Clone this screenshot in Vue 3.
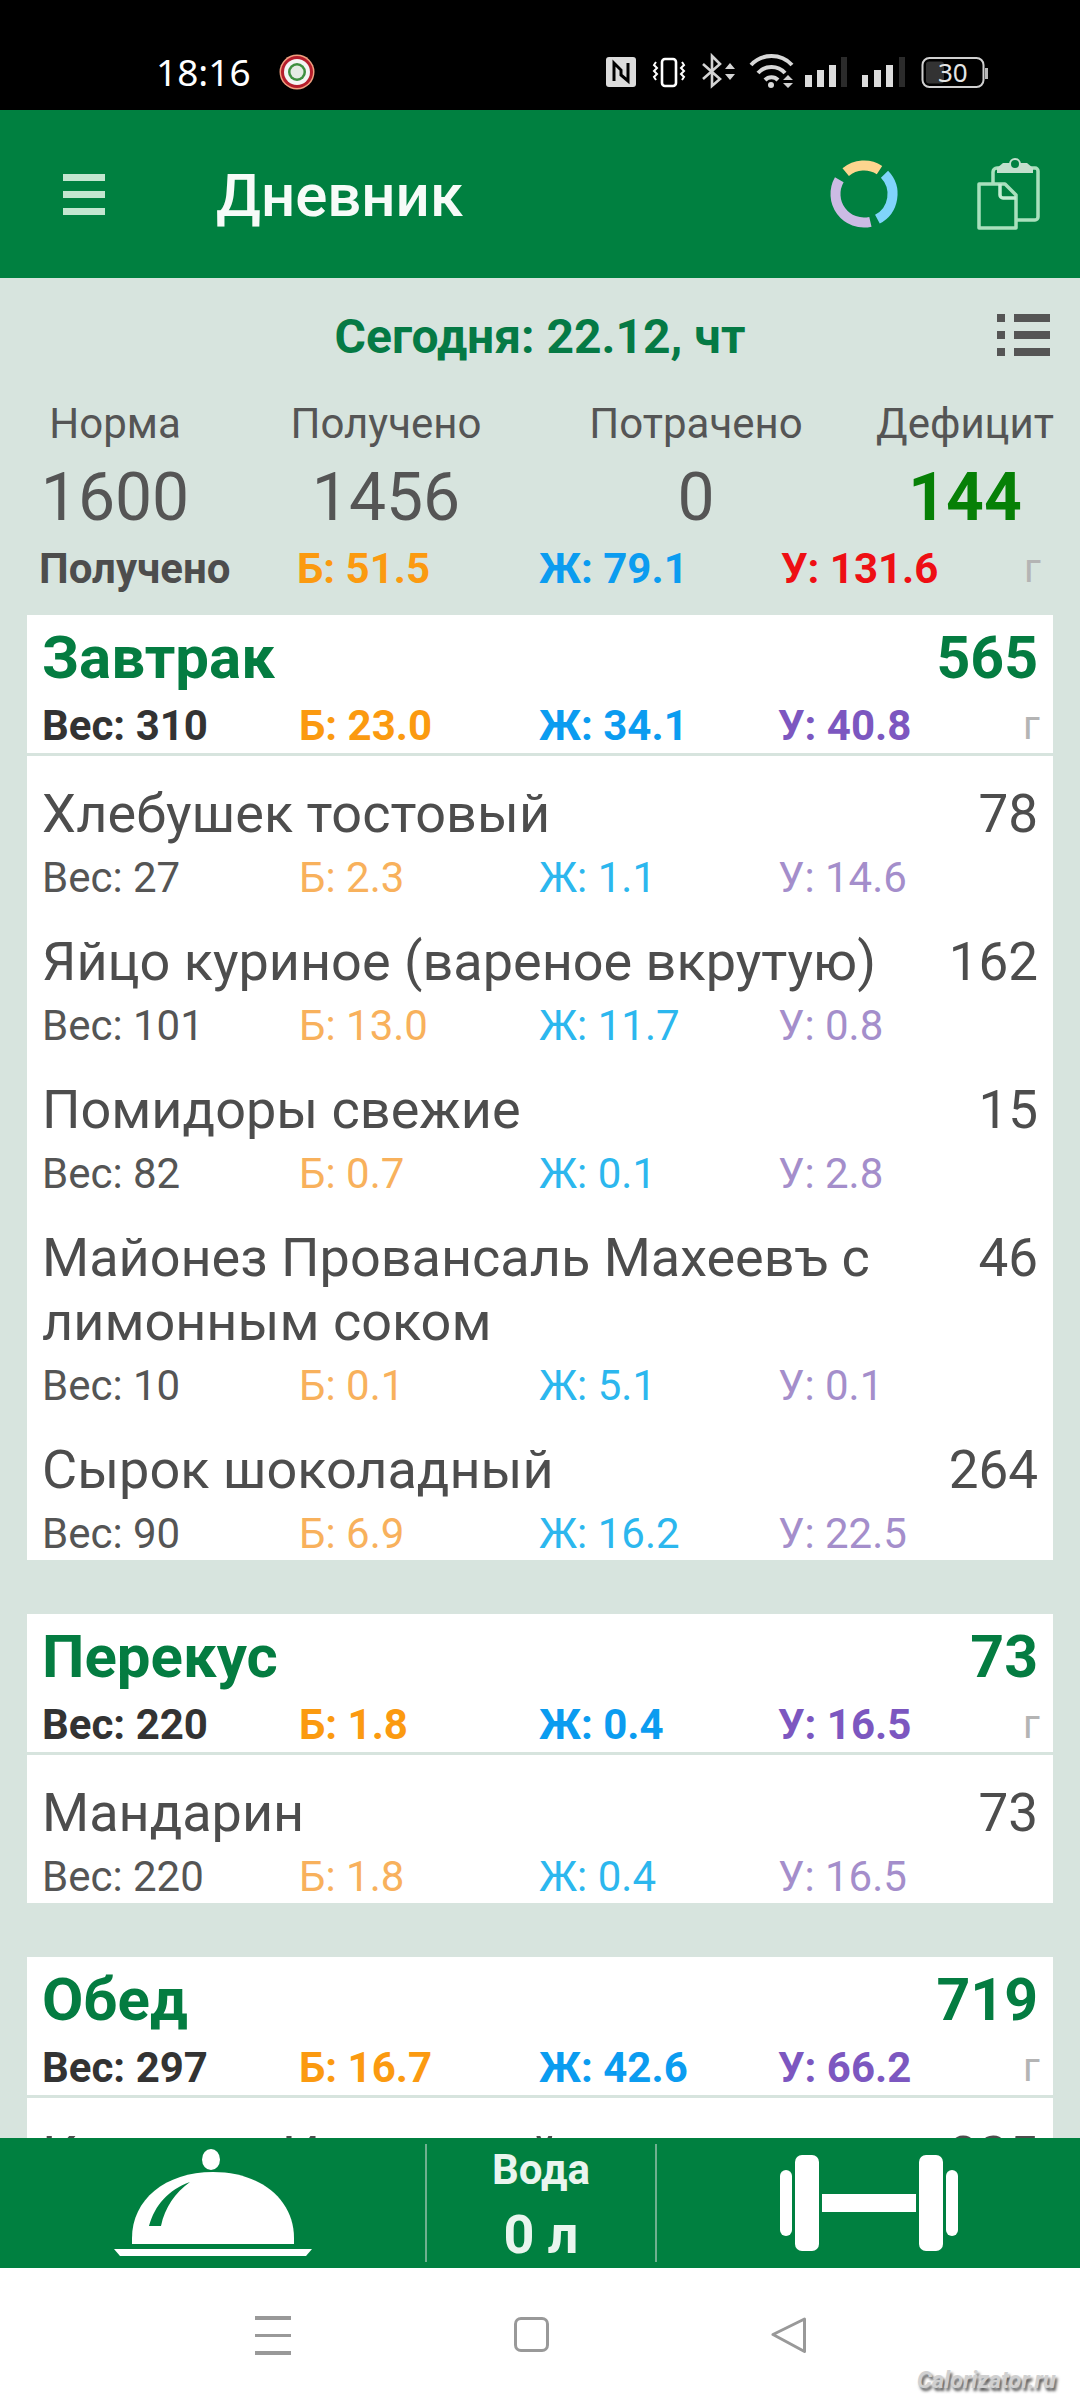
<script setup>
const totals = { p: 'Б: 51.5', f: 'Ж: 79.1', c: 'У: 131.6' }
const stats = [
  { label: 'Норма', value: '1600' },
  { label: 'Получено', value: '1456' },
  { label: 'Потрачено', value: '0' },
  { label: 'Дефицит', value: '144', good: true }
]
const meals = [
  {
    title: 'Завтрак', kcal: 565, w: 310, p: '23.0', f: '34.1', c: '40.8',
    items: [
      { name: 'Хлебушек тостовый', kcal: 78, w: 27, p: '2.3', f: '1.1', c: '14.6' },
      { name: 'Яйцо куриное (вареное вкрутую)', kcal: 162, w: 101, p: '13.0', f: '11.7', c: '0.8' },
      { name: 'Помидоры свежие', kcal: 15, w: 82, p: '0.7', f: '0.1', c: '2.8' },
      { name: 'Майонез Провансаль Махеевъ с лимонным соком', kcal: 46, w: 10, p: '0.1', f: '5.1', c: '0.1' },
      { name: 'Сырок шоколадный', kcal: 264, w: 90, p: '6.9', f: '16.2', c: '22.5' }
    ]
  },
  {
    title: 'Перекус', kcal: 73, w: 220, p: '1.8', f: '0.4', c: '16.5',
    items: [{ name: 'Мандарин', kcal: 73, w: 220, p: '1.8', f: '0.4', c: '16.5' }]
  },
  {
    title: 'Обед', kcal: 719, w: 297, p: '16.7', f: '42.6', c: '66.2',
    items: [{ name: 'Кукуруза Испанский', kcal: 325 }]
  }
]
</script>

<template>
  <div class="phone">
    <div class="status">
      <span class="time">18:16</span>
      <svg class="notif" viewBox="0 0 36 36" width="36" height="36">
        <circle cx="18" cy="18" r="17.500" fill="#f0a080" />
        <circle cx="18" cy="18" r="16" fill="#b51d2b" />
        <circle cx="18" cy="18" r="13" fill="#f4f4f4" />
        <circle cx="18" cy="18" r="9" fill="#3d8f3f" />
        <circle cx="18" cy="18" r="6.500" fill="#e4ebe4" />
      </svg>
      <svg class="sysicons" viewBox="0 0 400 50" width="400" height="50">
        <rect x="6" y="7" width="30" height="30" rx="3" fill="#dcdcdc" />
        <path d="M14 31V13l7 7v5l7 6V13" fill="none" stroke="#000" stroke-width="3" />
        <rect x="62" y="9" width="14" height="27" rx="3" fill="none" stroke="#fff" stroke-width="2.600" />
        <path d="M56 12l-2 3 3 3-3 3 3 3-3 3 2 3M82 12l2 3-3 3 3 3-3 3 3 3-2 3" fill="none" stroke="#fff" stroke-width="2" />
        <path d="M103 14l17 15-8 7V6l8 8-17 15" fill="none" stroke="#d4d4d4" stroke-width="2.600" />
        <path d="M125 19l5-6 5 6zM125 24l5 6 5-6z" fill="#d4d4d4" />
        <path d="M151 15a28 28 0 0 1 41 0" fill="none" stroke="#d8d8d8" stroke-width="4" />
        <path d="M158 23a18 18 0 0 1 27 0" fill="none" stroke="#d8d8d8" stroke-width="4" />
        <path d="M165 30a9 9 0 0 1 13 0" fill="none" stroke="#d8d8d8" stroke-width="4" />
        <circle cx="171" cy="35" r="3" fill="#d8d8d8" />
        <path d="M183 30l5-5 5 5zM183 33l5 5 5-5z" fill="#d0d0d0" />
        <g fill="#dcdcdc">
          <rect x="205" y="25" width="7" height="12" />
          <rect x="217" y="20" width="7" height="17" />
          <rect x="229" y="15" width="7" height="22" />
          <rect x="262" y="25" width="6" height="12" />
          <rect x="274" y="20" width="7" height="17" />
          <rect x="286" y="15" width="7" height="22" />
        </g>
        <rect x="241" y="7" width="6" height="30" fill="#2b2b2b" />
        <rect x="299" y="7" width="6" height="30" fill="#2b2b2b" />
        <rect x="322.500" y="8" width="61" height="29" rx="7" fill="none" stroke="#d0d0d0" stroke-width="2" />
        <rect x="326" y="11.500" width="18" height="22" rx="3" fill="#333" />
        <rect x="385" y="18" width="3" height="11" fill="#b8b8b8" />
        <text x="338" y="32" class="battery">30</text>
      </svg>
    </div>

    <header class="appbar">
      <div class="burger"><i></i><i></i><i></i></div>
      <h1 class="title">Дневник</h1>
      <svg class="ring" viewBox="0 0 72 72" width="72" height="72">
        <g fill="none" stroke-width="10">
          <path d="M17.700 14.200A28.500 28.500 0 0 1 51.500 12.100" stroke="#fdd58f" />
          <path d="M56.500 16.200A28.500 28.500 0 0 1 49.400 61.200" stroke="#80d4fb" />
          <path d="M42.400 63.800A28.500 28.500 0 0 1 11.300 21.800" stroke="#ccbbe4" />
        </g>
      </svg>
      <svg class="clip" viewBox="0 0 64 72" width="64" height="72">
        <path d="M17 25V14a4 4 0 0 1 4-4h38a3 3 0 0 1 3 3v46a3 3 0 0 1-3 3H41" fill="none" stroke="#a9e0bd" stroke-width="3.500" />
        <path d="M21 10l6-5h24l6 5v5H21z" fill="#c3dfcd" />
        <circle cx="39" cy="6" r="5" fill="#008040" stroke="#c3dfcd" stroke-width="2" />
        <path d="M24 26H3v44h37V37L29 26z" fill="#008040" stroke="#a9e0bd" stroke-width="3.500" stroke-linejoin="round" />
        <path d="M24 26v11a3 3 0 0 0 3 3h13" fill="none" stroke="#c3ecd2" stroke-width="3.500" />
      </svg>
    </header>

    <main class="content">
      <div class="date-row">
        <span class="date">Сегодня: 22.12, чт</span>
        <svg class="list" viewBox="0 0 53 42" width="53" height="42">
          <path d="M0 0h8v8H0zM17 0h36v8H17zM0 17h8v8H0zM17 17h36v8H17zM0 34h8v8H0zM17 34h36v8H17z" fill="#555" />
        </svg>
      </div>

      <div class="stats">
        <div v-for="s in stats" :key="s.label" class="stat">
          <span class="stat-label">{{ s.label }}</span>
          <span class="stat-value" :class="{ good: s.good }">{{ s.value }}</span>
        </div>
      </div>

      <div class="macros total">
        <span class="lead">Получено</span>
        <span class="prot">{{ totals.p }}</span>
        <span class="fat">{{ totals.f }}</span>
        <span class="carb-red">{{ totals.c }}</span>
        <span class="unit">г</span>
      </div>

      <section v-for="m in meals" :key="m.title" class="card">
        <div class="meal-head">
          <div class="meal-top">
            <span>{{ m.title }}</span>
            <span class="meal-kcal">{{ m.kcal }}</span>
          </div>
          <div class="macros">
            <span class="lead">Вес: {{ m.w }}</span>
            <span class="prot">Б: {{ m.p }}</span>
            <span class="fat">Ж: {{ m.f }}</span>
            <span class="carb">У: {{ m.c }}</span>
            <span class="unit">г</span>
          </div>
        </div>
        <div v-for="it in m.items" :key="it.name" class="item">
          <div class="item-top">
            <span class="item-name">{{ it.name }}</span>
            <span class="item-kcal">{{ it.kcal }}</span>
          </div>
          <div v-if="it.w" class="macros light">
            <span class="lead">Вес: {{ it.w }}</span>
            <span class="prot">Б: {{ it.p }}</span>
            <span class="fat">Ж: {{ it.f }}</span>
            <span class="carb">У: {{ it.c }}</span>
          </div>
        </div>
      </section>
    </main>

    <nav class="bottom">
      <div class="bottom-cell">
        <svg viewBox="0 0 200 116" width="200" height="116">
          <ellipse cx="98" cy="14.500" rx="9" ry="10.500" fill="#fff" />
          <path d="M19 99V93C19 55 52 27 100 27S181 55 181 93V99Z" fill="#fff" />
          <path d="M1 104H199L193 111H7Z" fill="#fff" />
          <path d="M77 37C55 45 42 60 36 81H48C52 62 62 48 77 37Z" fill="#008040" />
        </svg>
      </div>
      <div class="bottom-cell water">
        <span>Вода</span>
        <strong>0 л</strong>
      </div>
      <div class="bottom-cell">
        <svg viewBox="0 0 178 96" width="178" height="96">
          <g fill="#fff">
            <rect x="0" y="15" width="12" height="66" rx="6" />
            <rect x="15" y="0" width="24" height="96" rx="7" />
            <rect x="42" y="39" width="94" height="18" />
            <rect x="139" y="0" width="24" height="96" rx="7" />
            <rect x="166" y="15" width="12" height="66" rx="6" />
          </g>
        </svg>
      </div>
    </nav>

    <footer class="sysnav">
      <div class="nav-menu"><i></i><i></i><i></i></div>
      <div class="nav-home"></div>
      <svg class="nav-back" viewBox="0 0 36 36" width="36" height="36">
        <path d="M33.500 2L2 17.500 33.500 34.500z" fill="none" stroke="#999" stroke-width="3" stroke-linejoin="round" />
      </svg>
      <span class="mark">Calorizator.ru</span>
    </footer>
  </div>
</template>

<style scoped>
.phone {
  width: 1080px;
  height: 2400px;
  display: flex;
  flex-direction: column;
  overflow: hidden;
  font-family: Roboto, "Liberation Sans", sans-serif;
  color: #4d4d4d;
  background: #fff;
}
.status {
  height: 110px;
  flex: none;
  background: #000;
  display: flex;
  align-items: flex-start;
}
.time {
  margin: 50px 0 0 156px;
  width: 123px;
  font-size: 37px;
  line-height: 44px;
  color: #fff;
  font-family: "Noto Sans", sans-serif;
}
.notif {
  margin-top: 54px;
}
.sysicons {
  margin: 50px 0 0 285px;
}
.battery {
  font-size: 26px;
  fill: #e4e4e4;
  font-family: "Noto Sans", sans-serif;
}
.appbar {
  height: 168px;
  flex: none;
  background: #008040;
  display: flex;
  align-items: center;
}
.burger {
  margin-left: 63px;
  width: 42px;
  display: flex;
  flex-direction: column;
  gap: 10px;
}
.burger i {
  display: block;
  height: 7px;
  background: #c3e6d0;
}
.title {
  margin: 3px 0 0 111px;
  font-size: 60px;
  font-weight: 500;
  color: #f6fbf8;
  flex: 1;
}
.ring {
  margin-right: 76px;
}
.clip {
  margin-right: 40px;
}
.content {
  flex: 1;
  min-height: 0;
  overflow: hidden;
  background: #d7e4de;
}
.date-row {
  height: 116px;
  position: relative;
  display: flex;
  align-items: center;
  justify-content: center;
}
.date {
  font-size: 48px;
  font-weight: 700;
  color: #057a45;
}
.list {
  position: absolute;
  left: 997px;
  top: 36px;
}
.stats {
  display: grid;
  grid-template-columns: 230px 312px 308px 230px;
  text-align: center;
  padding-top: 2px;
  color: #555;
}
.stat {
  display: flex;
  flex-direction: column;
}
.stat-label {
  height: 56px;
  line-height: 56px;
  font-size: 42px;
}
.stat-value {
  height: 92px;
  line-height: 92px;
  font-size: 66px;
}
.stat-value.good {
  font-weight: 700;
  color: #068006;
}
.macros {
  display: grid;
  grid-template-columns: 257px 240px 239px 245px 1fr;
  height: 48px;
  line-height: 48px;
  font-size: 42px;
  font-weight: 700;
  padding-left: 15px;
}
.macros.total {
  grid-template-columns: 258px 242px 242px 243px 1fr;
  height: 50px;
  line-height: 50px;
  padding-left: 39px;
  margin-bottom: 21px;
}
.macros .lead {
  color: #333;
}
.total .lead {
  color: #4d4d4d;
}
.prot {
  color: #fb9a10;
}
.fat {
  color: #0b9cf0;
}
.carb {
  color: #7c57c0;
}
.carb-red {
  color: #ee0f14;
}
.macros .unit {
  color: #b4b4b4;
  font-weight: 400;
  font-size: 40px;
}
.card {
  margin: 0 27px 54px;
  background: #fff;
}
.meal-head {
  height: 138px;
  border-bottom: 3px solid #d7e4de;
}
.meal-top {
  height: 87px;
  line-height: 86px;
  padding: 0 15px;
  display: flex;
  justify-content: space-between;
  font-size: 60px;
  font-weight: 700;
  color: #047c41;
}
.meal-kcal {
  font-size: 59px;
}
.item {
  padding: 26px 0 2px;
}
.item-top {
  display: flex;
  justify-content: space-between;
  padding: 0 15px;
  font-size: 54px;
  line-height: 64px;
  margin-bottom: 8px;
}
.item-name {
  width: 860px;
}
.item-kcal {
  font-size: 53px;
}
.macros.light {
  font-weight: 400;
}
.light .lead {
  color: #555;
}
.light .prot {
  color: #f8b15c;
}
.light .fat {
  color: #2cb7ee;
}
.light .carb {
  color: #a48ecb;
}
.bottom {
  height: 130px;
  flex: none;
  background: #008040;
  display: grid;
  grid-template-columns: 425px 232px 423px;
}
.bottom-cell {
  display: flex;
  align-items: center;
  justify-content: center;
}
.water {
  flex-direction: column;
  justify-content: flex-start;
  color: #e9f5ee;
  margin: 6px 0;
  border-left: 2px solid #6fb08f;
  border-right: 2px solid #6fb08f;
}
.water span {
  font-size: 42px;
  font-weight: 700;
  line-height: 52px;
}
.water strong {
  font-size: 54px;
  font-weight: 700;
  line-height: 52px;
  margin-top: 13px;
}
.sysnav {
  height: 132px;
  flex: none;
  position: relative;
  background: #fff;
}
.nav-menu {
  position: absolute;
  left: 255px;
  top: 48px;
  width: 36px;
  display: flex;
  flex-direction: column;
  gap: 14px;
}
.nav-menu i {
  display: block;
  height: 3.500px;
  background: #999;
}
.nav-home {
  position: absolute;
  left: 514px;
  top: 49px;
  width: 35px;
  height: 35px;
  box-sizing: border-box;
  border: 3px solid #999;
  border-radius: 7px;
}
.nav-back {
  position: absolute;
  left: 771px;
  top: 49px;
}
.mark {
  position: absolute;
  left: 917px;
  top: 99px;
  font-size: 23.500px;
  line-height: 26px;
  font-weight: 700;
  font-style: italic;
  color: #d0d0d0;
  text-shadow: 2px 3px 3px #555;
}
</style>

<style>
html,
body {
  margin: 0;
  background: #fff;
}
</style>
